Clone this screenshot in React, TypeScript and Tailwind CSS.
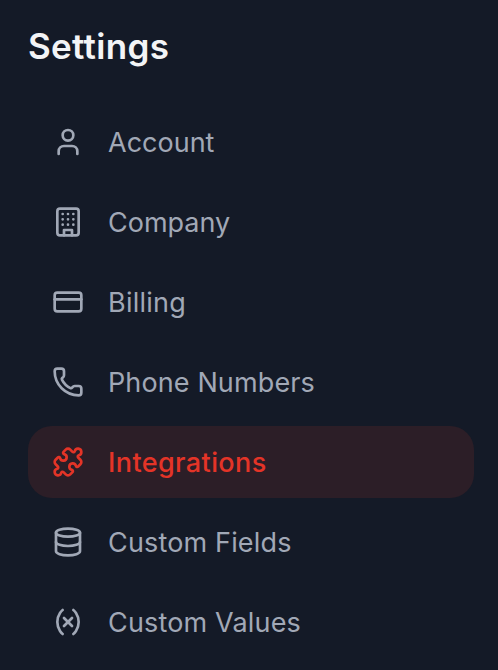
import React from "react";
import { User, CreditCard, Phone, Puzzle, Database, Variable } from "lucide-react";

function Building({ className }: { className?: string }) {
  return (
    <svg viewBox="0 0 24 24" fill="none" stroke="currentColor" strokeWidth={2} strokeLinecap="round" strokeLinejoin="round" className={className}>
      <rect width="16" height="20" x="4" y="2" rx="2" />
      <path d="M9 22v-4h6v4M8 6h.01M16 6h.01M12 6h.01M12 10h.01M12 14h.01M16 10h.01M16 14h.01M8 10h.01M8 14h.01" />
    </svg>
  );
}

const items = [
  { label: "Account", Icon: User, tracking: "tracking-normal" },
  { label: "Company", Icon: Building, tracking: "tracking-normal" },
  { label: "Billing", Icon: CreditCard, tracking: "tracking-[0.25px]" },
  { label: "Phone Numbers", Icon: Phone, tracking: "tracking-[0.12px]" },
  { label: "Integrations", Icon: Puzzle, active: true, tracking: "tracking-[0.4px]" },
  { label: "Custom Fields", Icon: Database, tracking: "tracking-[0.16px]" },
  { label: "Custom Values", Icon: Variable, tracking: "tracking-[0.16px]" },
];

export default function App() {
  return (
    <aside className="h-[670px] w-full overflow-hidden bg-[#141a27] pl-7 pr-6 pt-[23px] font-['Inter',sans-serif]">
      <h1 className="h-[46px] text-[35px] font-semibold leading-[46px] tracking-[0.3px] text-[#f3f4f6]">Settings</h1>
      <nav className="mt-[37px] flex flex-col gap-2">
        {items.map(({ label, Icon, active, tracking }) => (
          <a
            key={label}
            className={
              active
                ? "flex h-[72px] items-center gap-6 rounded-[24px] bg-[#2c1e27] px-6 text-[27px] font-medium text-[#e43427]"
                : "flex h-[72px] items-center gap-6 rounded-[24px] px-6 text-[27px] text-[#a1a8b6]"
            }
          >
            <Icon className="size-8 shrink-0" />
            <span className={`whitespace-nowrap pt-[3px] ${tracking}`}>{label}</span>
          </a>
        ))}
      </nav>
    </aside>
  );
}
